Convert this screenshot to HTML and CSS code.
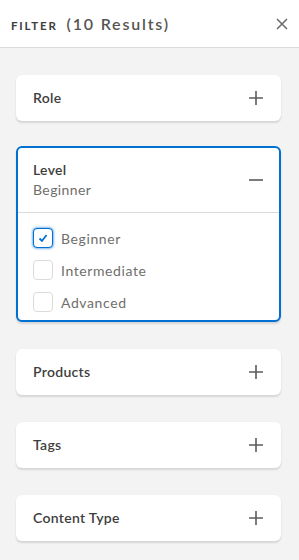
FILE: index.html
```html
<!DOCTYPE html>
<html lang="en">
<head>
<meta charset="utf-8">
<title>Filter</title>
<link rel="stylesheet" href="styles.css">
</head>
<body>
<header class="filter-header">
  <h1 class="filter-title"><span class="title-label">Filter</span><span class="title-count">(10 Results)</span></h1>
  <button class="close-btn" aria-label="Close">
    <svg width="12" height="12" viewBox="0 0 12 12"><path d="M1 1 L11 11 M11 1 L1 11" stroke="#706e6b" stroke-width="1.6" fill="none"/></svg>
  </button>
</header>
<main class="filters">
  <section class="card">
    <div class="card-head">
      <div class="card-titles"><span class="card-title">Role</span></div>
      <svg class="toggle" width="16" height="16" viewBox="0 0 16 16"><path d="M8 1 V15 M1 8 H15" stroke="#5c5c5c" stroke-width="1.6" fill="none"/></svg>
    </div>
  </section>
  <section class="card card-open">
    <div class="card-head card-head-open">
      <div class="card-titles"><span class="card-title">Level</span><span class="card-sub">Beginner</span></div>
      <svg class="toggle" width="16" height="16" viewBox="0 0 16 16"><path d="M1 8 H15" stroke="#5c5c5c" stroke-width="1.6" fill="none"/></svg>
    </div>
    <ul class="options">
      <li class="option"><span class="checkbox checked"><svg width="10" height="10" viewBox="0 0 10 10"><path d="M1.5 5.5 L4 8 L8.5 2" stroke="#0070d2" stroke-width="1.8" fill="none"/></svg></span><span class="option-label">Beginner</span></li>
      <li class="option"><span class="checkbox"></span><span class="option-label">Intermediate</span></li>
      <li class="option"><span class="checkbox"></span><span class="option-label">Advanced</span></li>
    </ul>
  </section>
  <section class="card">
    <div class="card-head">
      <div class="card-titles"><span class="card-title">Products</span></div>
      <svg class="toggle" width="16" height="16" viewBox="0 0 16 16"><path d="M8 1 V15 M1 8 H15" stroke="#5c5c5c" stroke-width="1.6" fill="none"/></svg>
    </div>
  </section>
  <section class="card">
    <div class="card-head">
      <div class="card-titles"><span class="card-title">Tags</span></div>
      <svg class="toggle" width="16" height="16" viewBox="0 0 16 16"><path d="M8 1 V15 M1 8 H15" stroke="#5c5c5c" stroke-width="1.6" fill="none"/></svg>
    </div>
  </section>
  <section class="card">
    <div class="card-head">
      <div class="card-titles"><span class="card-title">Content Type</span></div>
      <svg class="toggle" width="16" height="16" viewBox="0 0 16 16"><path d="M8 1 V15 M1 8 H15" stroke="#5c5c5c" stroke-width="1.6" fill="none"/></svg>
    </div>
  </section>
</main>
</body>
</html>
```

FILE: styles.css
```css
* { box-sizing: border-box; }
html, body {
  margin: 0;
  padding: 0;
  background: #f3f3f3;
  font-family: "Lato", "Inter", sans-serif;
  color: #3e3e3c;
}
.filter-header {
  height: 48px;
  background: #fff;
  border-bottom: 1px solid #dddbda;
  display: flex;
  align-items: center;
  justify-content: space-between;
  padding: 0 10px 0 11px;
}
.filter-title {
  margin: 0;
  display: flex;
  align-items: baseline;
  font-weight: 700;
}
.title-label {
  text-transform: uppercase;
  font-size: 11.5px;
  letter-spacing: 1.8px;
  color: #3e3e3c;
  margin-right: 9px;
}
.title-count {
  font-size: 16px;
  font-weight: 600;
  letter-spacing: 1.8px;
  color: #575553;
}
.close-btn {
  border: 0;
  background: none;
  padding: 0;
  width: 14px;
  height: 14px;
  display: flex;
  align-items: center;
  justify-content: center;
}
.filters {
  padding: 27px 18px 20px 16px;
  display: flex;
  flex-direction: column;
  gap: 27px;
}
.card {
  background: #fff;
  border-radius: 6px;
  box-shadow: 0 2px 2px rgba(0, 0, 0, 0.12), 0 0 1px rgba(0, 0, 0, 0.06);
}
.card-open {
  border: 2px solid #0070d2;
  margin-top: -2px;
}
.card-head {
  display: flex;
  align-items: center;
  justify-content: space-between;
  padding: 13px 17px 13px 17px;
}
.card-open .card-head {
  padding: 12px 15px 12px 15px;
  border-bottom: 1px solid #dddbda;
}
.card-titles {
  display: flex;
  flex-direction: column;
}
.card-title {
  font-size: 14px;
  line-height: 20px;
  font-weight: 600;
  letter-spacing: 0.3px;
  color: #3e3e3c;
}
.card-sub {
  font-size: 14px;
  line-height: 20px;
  color: #706e6b;
  letter-spacing: 0.4px;
}
.toggle { display: block; }
.options {
  list-style: none;
  margin: 0;
  padding: 9px 15px 2px 15px;
}
.option {
  height: 32px;
  display: flex;
  align-items: center;
}
.checkbox {
  width: 20px;
  height: 20px;
  border: 1px solid #dddbda;
  border-radius: 4px;
  margin-right: 8px;
  display: flex;
  align-items: center;
  justify-content: center;
  background: #fff;
}
.checkbox.checked {
  border-color: #0070d2;
  box-shadow: 0 0 3px #0070d2;
}
.option-label {
  font-size: 14px;
  color: #706e6b;
  letter-spacing: 0.6px;
}
```
